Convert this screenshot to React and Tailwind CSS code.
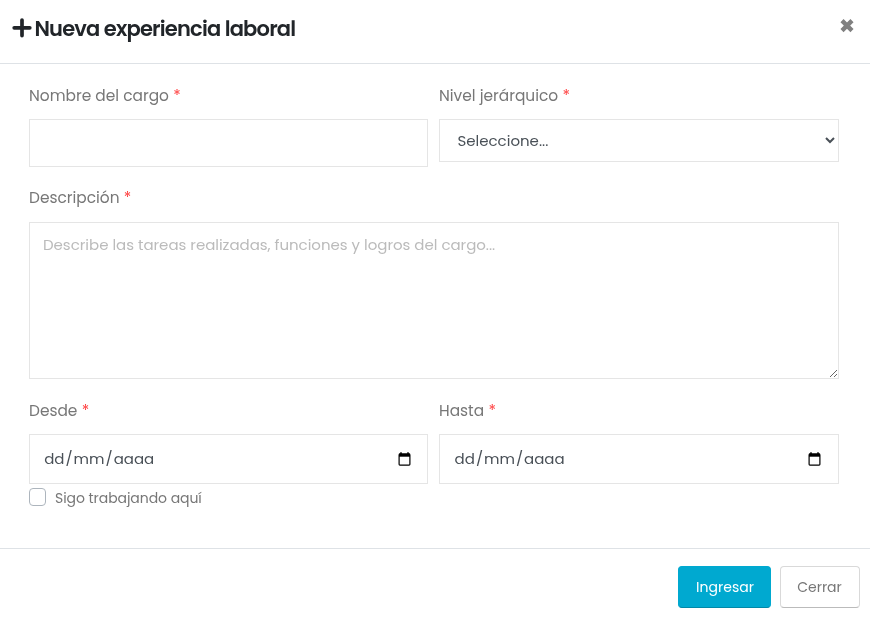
import React from "react";

function Label({ children, className = "" }) {
  return (
    <label className={`flex h-6 items-center gap-[4.3px] whitespace-nowrap text-[15.4px] leading-6 text-[#777] ${className}`}>
      <span>{children}</span>
      <span className="text-[#ff4040]">*</span>
    </label>
  );
}

function CalendarIcon() {
  return (
    <svg width="13" height="14" viewBox="0 0 13 14" fill="none">
      <path d="M3 0.2v2M10 0.2v2" stroke="#000" strokeWidth="1.5" />
      <rect x="1.1" y="2.1" width="10.8" height="11" rx="0.8" stroke="#000" strokeWidth="1.2" />
      <path d="M1 1.5h11v3.2H1z" fill="#000" />
    </svg>
  );
}

function DateField({ className = "" }) {
  return (
    <div className={`flex h-[50px] items-center justify-between border border-[#e5e5e5] text-[15px] text-[#495057] ${className}`}>
      <div className="flex">
        <span className="px-px">dd</span>
        <span>/</span>
        <span className="px-px">mm</span>
        <span>/</span>
        <span className="px-px">aaaa</span>
      </div>
      <CalendarIcon />
    </div>
  );
}

export default function App() {
  return (
    <div className="flex h-[623px] w-[870px] flex-col font-[Poppins,Inter,'Open_Sans',sans-serif] antialiased will-change-[transform,opacity]">
      <header className="flex h-16 items-start justify-between border-b border-[#dee2e6] pl-3 pr-[16px]">
        <h5 className="flex h-14 items-center gap-[2.4px] whitespace-nowrap text-[21px] font-semibold text-[#212529]">
          <svg width="20" height="20" viewBox="0 0 20 20" stroke="#212529" strokeWidth="3.7" strokeLinecap="round">
            <path d="M10 2v15.6M2.2 9.8h15.6" />
          </svg>
          <span className="pt-[2px] tracking-[-0.79px]">Nueva experiencia laboral</span>
        </h5>
        <button aria-label="Cerrar" className="mt-[19px]">
          <svg width="14" height="14" viewBox="0 0 14 14" stroke="#808080" strokeWidth="4.4">
            <path d="M2 1.6l10 10M12 1.6L2 11.6" />
          </svg>
        </button>
      </header>

      <main className="flex h-[484px] flex-col pl-[29px] pr-[31px] pt-5">
        <div className="grid grid-cols-[399px_400px] gap-x-[11px]">
          <div>
            <Label>Nombre del cargo</Label>
            <input className="mt-[11px] block h-12 w-full border border-[#e5e5e5]" />
          </div>
          <div>
            <Label>Nivel jerárquico</Label>
            <select className="mt-[11px] block h-[43px] w-[399.6px] border border-[#e5e5e5] pl-[13.4px] text-[15px] text-[#495057]">
              <option>Seleccione...</option>
            </select>
          </div>
        </div>

        <Label className="mt-[19px]">Descripción</Label>
        <textarea
          className="mt-3 block h-[157px] w-full shrink-0 resize border border-[#e5e5e5] px-[13px] py-[11px] text-[15px] leading-[22px] tracking-[-0.02px] placeholder:text-[#bbb]"
          placeholder="Describe las tareas realizadas, funciones y logros del cargo..."
        />

        <div className="mt-5 grid grid-cols-[399px_400px] gap-x-[11px]">
          <div>
            <Label className="mb-[11px]">Desde</Label>
            <DateField className="pl-[13.2px] pr-4" />
            <label className="mt-1 flex h-[18px] items-center gap-[9px] text-sm text-[#777]">
              <span className="h-[18px] w-[17px] rounded-[4px] border border-[#adb5bd]" />
              <span className="whitespace-nowrap pt-[2px] tracking-[-0.06px]">Sigo trabajando aquí</span>
            </label>
          </div>
          <div>
            <Label className="mb-[11px]">Hasta</Label>
            <DateField className="pl-[13.6px] pr-[17px]" />
          </div>
        </div>
      </main>

      <footer className="flex grow items-start justify-end gap-[9px] border-t border-[#dee2e6] pr-[10px] pt-[17px] text-sm">
        <button className="h-[42px] w-[93px] rounded-[4px] border border-[#00a9d0] border-b-[#0088a8] bg-[#00a9d0] pl-px text-white">
          Ingresar
        </button>
        <button className="h-[42px] w-20 rounded-[4px] border border-[#d9d9d9] border-b-[#bbb] pr-px text-[#777]">
          Cerrar
        </button>
      </footer>
    </div>
  );
}
